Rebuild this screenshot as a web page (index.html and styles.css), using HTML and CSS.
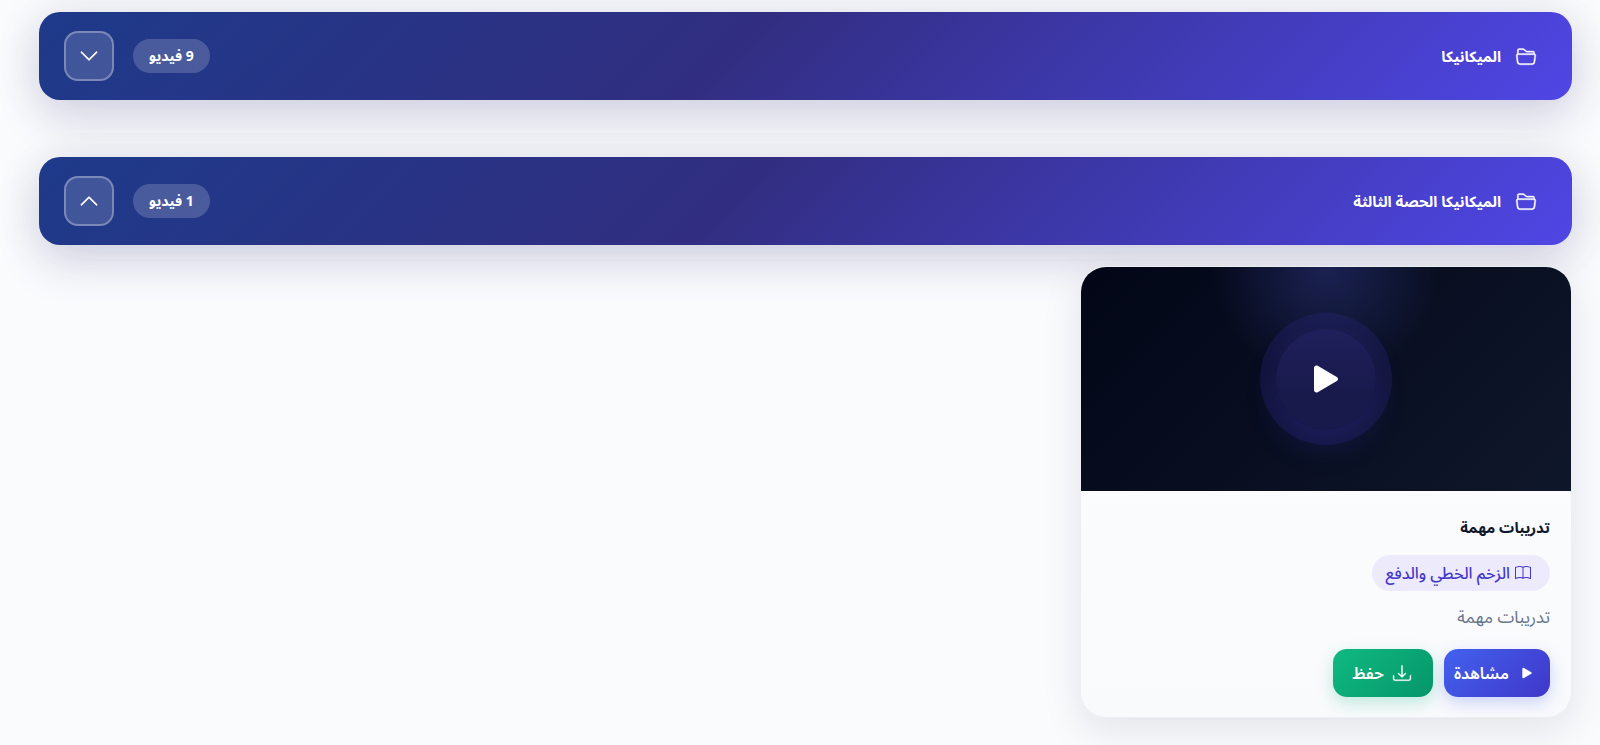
FILE: index.html
```html
<!DOCTYPE html>
<html lang="ar" dir="rtl">
  <head>
    <meta charset="UTF-8" />
    <meta name="viewport" content="width=device-width, initial-scale=1.0" />
    <title>الميكانيكا</title>
    <link rel="stylesheet" href="styles.css">
  </head>
  <body>
    <main class="sections">
      <section class="section">
        <div class="section-header">
          <h2 class="section-title">
            <svg class="icon icon-folder" viewBox="0 0 16 16" aria-hidden="true"><path d="M1 3.5A1.5 1.5 0 0 1 2.5 2h2.764c.958 0 1.76.56 2.311 1.184C7.985 3.648 8.48 4 9 4h4.5A1.5 1.5 0 0 1 15 5.5v.64c.57.265.94.876.856 1.546l-.64 5.124A2.5 2.5 0 0 1 12.733 15H3.266a2.5 2.5 0 0 1-2.481-2.19l-.64-5.124A1.5 1.5 0 0 1 1 6.14V3.5zM2 6h12v-.5a.5.5 0 0 0-.5-.5H9c-.964 0-1.71-.629-2.174-1.154C6.374 3.334 5.82 3 5.264 3H2.5a.5.5 0 0 0-.5.5V6zm-.367 1a.5.5 0 0 0-.496.562l.64 5.124A1.5 1.5 0 0 0 3.266 14h9.468a1.5 1.5 0 0 0 1.489-1.314l.64-5.124A.5.5 0 0 0 14.367 7H1.633z"/></svg>
            الميكانيكا
          </h2>
          <span class="count">9 فيديو</span>
          <button class="toggle" aria-expanded="false" aria-label="الميكانيكا">
            <svg class="icon icon-chevron" viewBox="0 0 16 16" aria-hidden="true"><path d="M1.646 4.646a.5.5 0 0 1 .708 0L8 10.293l5.646-5.647a.5.5 0 0 1 .708.708l-6 6a.5.5 0 0 1-.708 0l-6-6a.5.5 0 0 1 0-.708z"/></svg>
          </button>
        </div>
      </section>

      <section class="section">
        <div class="section-header">
          <h2 class="section-title">
            <svg class="icon icon-folder" viewBox="0 0 16 16" aria-hidden="true"><path d="M1 3.5A1.5 1.5 0 0 1 2.5 2h2.764c.958 0 1.76.56 2.311 1.184C7.985 3.648 8.48 4 9 4h4.5A1.5 1.5 0 0 1 15 5.5v.64c.57.265.94.876.856 1.546l-.64 5.124A2.5 2.5 0 0 1 12.733 15H3.266a2.5 2.5 0 0 1-2.481-2.19l-.64-5.124A1.5 1.5 0 0 1 1 6.14V3.5zM2 6h12v-.5a.5.5 0 0 0-.5-.5H9c-.964 0-1.71-.629-2.174-1.154C6.374 3.334 5.82 3 5.264 3H2.5a.5.5 0 0 0-.5.5V6zm-.367 1a.5.5 0 0 0-.496.562l.64 5.124A1.5 1.5 0 0 0 3.266 14h9.468a1.5 1.5 0 0 0 1.489-1.314l.64-5.124A.5.5 0 0 0 14.367 7H1.633z"/></svg>
            الميكانيكا الحصة الثالثة
          </h2>
          <span class="count">1 فيديو</span>
          <button class="toggle" aria-expanded="true" aria-label="الميكانيكا الحصة الثالثة">
            <svg class="icon icon-chevron" viewBox="0 0 16 16" aria-hidden="true"><path d="M7.646 4.646a.5.5 0 0 1 .708 0l6 6a.5.5 0 0 1-.708.708L8 5.707l-5.646 5.647a.5.5 0 0 1-.708-.708l6-6z"/></svg>
          </button>
        </div>

        <div class="video-grid">
          <article class="card">
            <div class="thumb">
              <div class="play-circle">
                <svg class="icon icon-play-large" viewBox="0 0 16 16" aria-hidden="true"><path d="m11.596 8.697-6.363 3.692c-.54.313-1.233-.066-1.233-.697V4.308c0-.63.692-1.01 1.233-.696l6.363 3.692a.802.802 0 0 1 0 1.393z"/></svg>
              </div>
            </div>
            <div class="card-body">
              <h3 class="card-title">تدريبات مهمة</h3>
              <span class="chip">
                <svg class="icon icon-book" viewBox="0 0 16 16" aria-hidden="true"><path d="M1 2.828c.885-.37 2.154-.769 3.388-.893 1.33-.134 2.458.063 3.112.752v9.746c-.935-.53-2.12-.603-3.213-.493-1.18.12-2.37.461-3.287.811V2.828zm7.5-.141c.654-.689 1.782-.886 3.112-.752 1.234.124 2.503.523 3.388.893v9.923c-.918-.35-2.107-.692-3.287-.81-1.094-.111-2.278-.039-3.213.492V2.687zM8 1.783C7.015.936 5.587.81 4.287.94c-1.514.153-3.042.672-3.994 1.105A.5.5 0 0 0 0 2.5v11a.5.5 0 0 0 .707.455c.882-.4 2.303-.881 3.68-1.02 1.409-.142 2.59.087 3.223.877a.5.5 0 0 0 .78 0c.633-.79 1.814-1.019 3.222-.877 1.378.139 2.8.62 3.681 1.02A.5.5 0 0 0 16 13.5v-11a.5.5 0 0 0-.293-.455c-.952-.433-2.48-.952-3.994-1.105C10.413.809 8.985.936 8 1.783z"/></svg>
                الزخم الخطي والدفع
              </span>
              <p class="card-text">تدريبات مهمة</p>
              <div class="actions">
                <button class="btn btn-watch">
                  <svg class="icon icon-btn" viewBox="0 0 16 16" aria-hidden="true"><path d="m11.596 8.697-6.363 3.692c-.54.313-1.233-.066-1.233-.697V4.308c0-.63.692-1.01 1.233-.696l6.363 3.692a.802.802 0 0 1 0 1.393z"/></svg>
                  مشاهدة
                </button>
                <button class="btn btn-save">
                  <svg class="icon icon-btn" viewBox="0 0 16 16" aria-hidden="true"><path d="M.5 9.9a.5.5 0 0 1 .5.5v2.5a1 1 0 0 0 1 1h12a1 1 0 0 0 1-1v-2.5a.5.5 0 0 1 1 0v2.5a2 2 0 0 1-2 2H2a2 2 0 0 1-2-2v-2.5a.5.5 0 0 1 .5-.5z"/><path d="M7.646 11.854a.5.5 0 0 0 .708 0l3-3a.5.5 0 0 0-.708-.708L8.5 10.293V1.5a.5.5 0 0 0-1 0v8.793L5.354 8.146a.5.5 0 1 0-.708.708l3 3z"/></svg>
                  حفظ
                </button>
              </div>
            </div>
          </article>
        </div>
      </section>
    </main>

    <script>
      document.querySelectorAll(".toggle").forEach((toggle) => {
        toggle.addEventListener("click", () => {
          const grid = toggle.closest(".section").querySelector(".video-grid");
          const expanded = toggle.getAttribute("aria-expanded") === "true";
          toggle.setAttribute("aria-expanded", String(!expanded));
          if (grid) {
            grid.hidden = expanded;
          }
        });
      });
    </script>
  </body>
</html>
```
FILE: styles.css
```css
* {
  box-sizing: border-box;
}

body {
  margin: 0;
  font-family: "Noto Sans", "Noto Sans Arabic", "DejaVu Sans", sans-serif;
  background: #fafbfd;
  color: #0f172a;
}

h2,
h3,
p {
  margin: 0;
}

button {
  font-family: inherit;
  cursor: pointer;
}

.icon {
  display: block;
  flex: none;
  overflow: visible;
  fill: currentColor;
}

.sections {
  display: flex;
  flex-direction: column;
  gap: 57px;
  padding: 12px 28px 27px 39px;
}

.section-header {
  display: flex;
  align-items: center;
  gap: 19px;
  padding: 19px 36px 19px 25px;
  border-radius: 21px;
  color: #fff;
  background: linear-gradient(135deg, #1e3a8a 0%, #312e81 45%, #4f46e5 100%);
  box-shadow:
    0 18px 45px rgba(49, 46, 129, 0.16),
    0 0 50px rgba(15, 23, 42, 0.08);
}

.section-title {
  display: flex;
  flex: 1;
  align-items: center;
  gap: 15px;
  font-size: 15px;
  line-height: 24px;
  font-weight: 700;
}

.icon-folder {
  width: 20px;
  height: 20px;
  stroke: currentColor;
  stroke-width: 0.3;
}

.count {
  padding: 5px 16px;
  border-radius: 17px;
  font-size: 14px;
  line-height: 24px;
  font-weight: 700;
  background: rgba(255, 255, 255, 0.18);
}

.toggle {
  display: flex;
  align-items: center;
  justify-content: center;
  width: 50px;
  height: 50px;
  padding: 0;
  border: 2px solid rgba(255, 255, 255, 0.3);
  border-radius: 14px;
  color: #fff;
  background: rgba(255, 255, 255, 0.15);
}

.icon-chevron {
  width: 20px;
  height: 20px;
  stroke: currentColor;
  stroke-width: 0.4;
}

.video-grid {
  display: grid;
  grid-template-columns: repeat(3, 1fr);
  gap: 28px;
  margin-top: 21px;
}

.video-grid[hidden] {
  display: none;
}

.card {
  overflow: hidden;
  border: 1px solid #eceef2;
  border-radius: 26px;
  background: linear-gradient(#fdfdff, #f9fafc);
  box-shadow: 0 12px 40px rgba(15, 23, 42, 0.1);
}

.thumb {
  display: flex;
  align-items: center;
  justify-content: center;
  height: 224px;
  background:
    radial-gradient(circle at 50% 0, rgba(80, 90, 220, 0.28), transparent 115px),
    linear-gradient(135deg, #020617, #0f172a);
}

.play-circle {
  display: flex;
  align-items: center;
  justify-content: center;
  width: 100px;
  height: 100px;
  border-radius: 50%;
  color: #fff;
  background: linear-gradient(#1f1f5c, #191a4c 60%);
  box-shadow:
    0 0 0 16px rgba(60, 50, 170, 0.2),
    0 16px 30px rgba(49, 46, 180, 0.26);
}

.icon-play-large {
  width: 48px;
  height: 48px;
}

.card-body {
  display: flex;
  flex-direction: column;
  align-items: flex-start;
  padding: 22px 21px 20px;
}

.card-title {
  margin-bottom: 14px;
  font-size: 15px;
  line-height: 28px;
  font-weight: 700;
}

.chip {
  display: flex;
  align-items: center;
  gap: 5px;
  margin-bottom: 12px;
  padding: 6px 19px 6px 14px;
  border-radius: 18px;
  font-size: 16px;
  line-height: 24px;
  font-weight: 500;
  color: #4338ca;
  background: #edebfb;
}

.icon-book {
  width: 16px;
  height: 16px;
}

.card-text {
  margin-bottom: 18px;
  font-size: 17px;
  line-height: 28px;
  color: #64748b;
}

.actions {
  display: flex;
  gap: 11px;
}

.btn {
  display: flex;
  align-items: center;
  gap: 9px;
  padding: 12px 19px;
  border: 0;
  border-radius: 14px;
  font-size: 16px;
  line-height: 24px;
  font-weight: 600;
  color: #fff;
}

.btn-watch {
  padding-left: 10px;
  padding-right: 14px;
  background: linear-gradient(135deg, #4361ee, #3f37c9);
  box-shadow: 0 6px 16px rgba(67, 97, 238, 0.25);
}

.btn-save {
  padding-right: 22px;
  background: linear-gradient(135deg, #10b981, #059669);
  box-shadow: 0 6px 16px rgba(16, 185, 129, 0.25);
}

.icon-btn {
  width: 18px;
  height: 18px;
  stroke: currentColor;
  stroke-width: 0.3;
}
```
